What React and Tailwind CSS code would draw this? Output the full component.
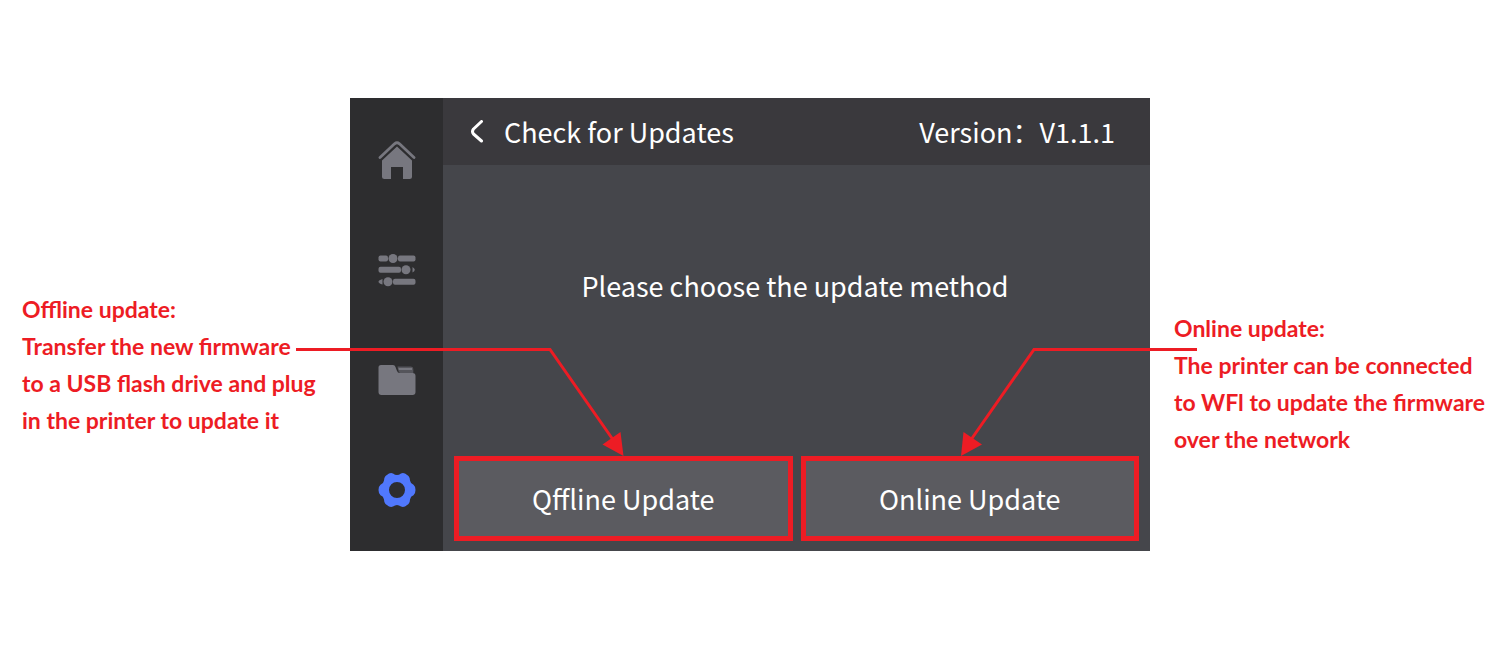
const NAV = [
  { label: "Home", icon: HomeIcon },
  { label: "Controls", icon: SlidersIcon },
  { label: "Files", icon: FolderIcon },
  { label: "Settings", icon: GearIcon, active: true },
];

function HomeIcon() {
  return (
    <svg viewBox="0 0 38 38" className="size-[38px]" fill="currentColor" aria-hidden="true">
      <path d="M2 16.500 L16.500 2.800 Q19 .8 21.500 2.800 L36 16.500" fill="none" stroke="currentColor" strokeWidth="2.800" strokeLinecap="round" />
      <path d="M19 5.500 L34 19.500 V35.500 Q34 38 31.500 38 H25 V26 H13 V38 H6.500 Q4 38 4 35.500 V19.500 Z" />
    </svg>
  );
}

function SlidersIcon() {
  return (
    <svg viewBox="0 0 38 34" className="h-[34px] w-[38px]" fill="currentColor" aria-hidden="true">
      <rect x="0.500" y="2.500" width="9.500" height="6" rx="2" />
      <circle cx="15" cy="5.500" r="4.500" />
      <rect x="20" y="2.500" width="17.500" height="6" rx="2" />
      <rect x="0.500" y="13.800" width="22.500" height="6" rx="2" />
      <circle cx="28" cy="16.800" r="4.500" />
      <path d="M34.500 14 Q39 16.800 34.500 19.600 Z" />
      <path d="M4.500 26 Q-3.500 28.500 4.500 31.500 Z" />
      <circle cx="10" cy="28.700" r="4.500" />
      <rect x="15" y="25.700" width="22.500" height="6" rx="2" />
    </svg>
  );
}

function FolderIcon() {
  return (
    <svg viewBox="0 0 38 32" className="h-[32px] w-[38px]" fill="currentColor" aria-hidden="true">
      <path d="M3 1 H15 Q16.800 1 17.500 3 L18.800 6.500 Q19.600 9 22 9 H34.500 Q37.500 9 37.500 12 V28 Q37.500 31 34.500 31 H3.500 Q.5 31 .5 28 V3.500 Q.5 1 3 1 Z" />
      <path d="M19.500 2.500 H33 Q35.300 2.500 35.300 5 V9 H22 Q20.500 8 20 5.500 Z" opacity=".55" />
      <path d="M20.500 4 H34 V6 H21 Z" />
    </svg>
  );
}

function GearIcon() {
  return (
    <svg viewBox="0 0 38 36" className="h-[36px] w-[38px]" aria-hidden="true">
      <path
        fill="currentColor"
        fillRule="evenodd"
        d="M11 1.600 Q13 .7 15 1.500 Q19 4.500 23 1.500 Q25 .7 27 1.600 L30.500 4 Q32 5.500 32 8.500 Q32.500 11.800 35.500 12.800 Q37.500 14.500 37.500 18 Q37.500 21.500 35.500 23.200 Q32.500 24.200 32 27.500 Q32 30.500 30.500 32 L27 34.400 Q25 35.300 23 34.500 Q19 31.500 15 34.500 Q13 35.300 11 34.400 L7.500 32 Q6 30.500 6 27.500 Q5.500 24.200 2.500 23.200 Q.5 21.500 .5 18 Q.5 14.500 2.500 12.800 Q5.500 11.800 6 8.500 Q6 5.500 7.500 4 Z M19 10 a8 8 0 1 0 0 16 a8 8 0 1 0 0 -16 Z"
      />
    </svg>
  );
}

function Note({ lines, className }) {
  return (
    <p className={`font-[Lato,'Liberation_Sans',sans-serif] text-[23px] leading-[37px] font-bold whitespace-nowrap text-[#ed1c24] ${className}`}>
      {lines.map((line) => (
        <span key={line} className="block">{line}</span>
      ))}
    </p>
  );
}

function Connectors() {
  return (
    <svg viewBox="0 0 800 453" className="pointer-events-none absolute inset-0 size-full overflow-visible" aria-hidden="true">
      <g fill="none" stroke="#ed1c24" strokeWidth="3">
        <path d="M-54 251.500 H200 L266 346" />
        <path d="M847 251.500 H684 L618 346" />
      </g>
      <g fill="#ed1c24">
        <path d="M273.500 358 L270.500 334 L252.500 346.500 Z" />
        <path d="M611 358 L613.500 334 L632 346.500 Z" />
      </g>
    </svg>
  );
}

function UpdateButton({ children }) {
  return (
    <button type="button" className="h-[85px] flex-1 border-5 border-[#ed1c24] bg-[#5b5b60] pt-[2px]">
      {children}
    </button>
  );
}

export default function App() {
  return (
    <main className="flex min-h-screen items-center bg-white pb-[2px]">
      <div className="grid w-full grid-cols-[7fr_16fr_7fr] items-start">
        <Note
          className="pt-[193px] pl-[22px]"
          lines={["Offline update:", "Transfer the new firmware", "to a USB flash drive and plug", "in the printer to update it"]}
        />

        <section className="relative flex min-h-[453px] bg-[#45464b] font-['Noto_Sans_CJK_SC',sans-serif] text-[27px] leading-[40px] text-white">
          <nav className="flex w-[93px] shrink-0 flex-col bg-[#2d2d2f] pt-[7px]">
            {NAV.map(({ label, icon: Icon, active }) => (
              <button
                key={label}
                type="button"
                aria-label={label}
                className={`flex h-[110px] items-center justify-center ${active ? "text-[#5078fd]" : "text-[#77777f]"}`}
              >
                <Icon />
              </button>
            ))}
          </nav>

          <div className="flex flex-1 flex-col">
            <header className="flex h-[67px] items-center bg-[#3a393d] pt-[2px] pr-[35px] pl-[27px]">
              <button type="button" aria-label="Back" className="mr-[20px]">
                <svg viewBox="0 0 14 24" className="h-[24px] w-[14px]" fill="none" stroke="currentColor" strokeWidth="3" strokeLinecap="round" strokeLinejoin="round" aria-hidden="true">
                  <path d="M11.500 1.500 L3.500 9 Q1.500 11.500 3.500 14 L11.500 21" />
                </svg>
              </button>
              <h1>Check for Updates</h1>
              <span className="ml-auto">Version：V1.1.1</span>
            </header>

            <div className="flex flex-1 flex-col px-[11px] pb-[10px]">
              <p className="flex flex-1 items-center justify-center pr-[3px] pb-[48px]">Please choose the update method</p>
              <div className="flex gap-[8px]">
                <UpdateButton>Qffline Update</UpdateButton>
                <UpdateButton>Online Update</UpdateButton>
              </div>
            </div>
          </div>
          <Connectors />
        </section>

        <Note
          className="pt-[212px] pl-[24px]"
          lines={["Online update:", "The printer can be connected", "to WFl to update the firmware", "over the network"]}
        />
      </div>
    </main>
  );
}
